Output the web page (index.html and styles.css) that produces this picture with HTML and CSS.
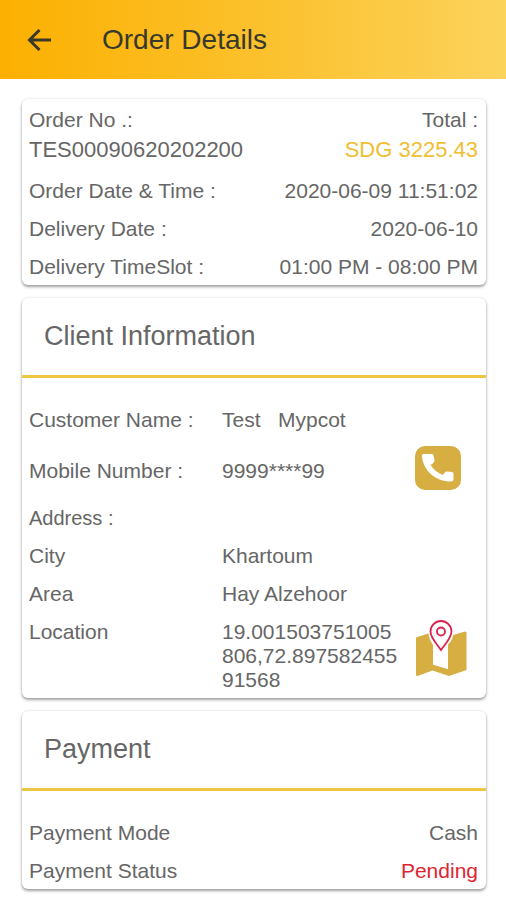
FILE: index.html
```html
<!DOCTYPE html>
<html lang="en">
<head>
    <meta charset="UTF-8">
    <meta name="viewport" content="width=device-width, initial-scale=1.0">
    <title>Order Details</title>
    <link rel="stylesheet" href="styles.css">
</head>
<body>
    <header class="header">
        <button class="back-btn" type="button" aria-label="Back">
            <svg width="26" height="24" viewBox="0 0 26 24" fill="none" stroke="currentColor" stroke-width="3">
                <path d="M25 12H4M13.500 2L3.500 12L13.500 22"/>
            </svg>
        </button>
        <h1>Order Details</h1>
    </header>

    <main class="content">
        <section class="card order-card">
            <dl>
                <div class="row order-top"><dt>Order No .:</dt><dd>Total :</dd></div>
                <div class="row order-main"><dt>TES00090620202200</dt><dd class="total">SDG 3225.43</dd></div>
                <div class="row"><dt>Order Date &amp; Time :</dt><dd>2020-06-09 11:51:02</dd></div>
                <div class="row"><dt>Delivery Date :</dt><dd>2020-06-10</dd></div>
                <div class="row"><dt>Delivery TimeSlot :</dt><dd>01:00 PM - 08:00 PM</dd></div>
            </dl>
        </section>

        <section class="card">
            <h2 class="card-title">Client Information</h2>
            <dl class="card-body">
                <div class="info-row"><dt>Customer Name :</dt><dd>Test&nbsp;&nbsp; Mypcot</dd></div>
                <div class="info-row phone-row">
                    <dt>Mobile Number :</dt>
                    <dd>9999****99</dd>
                    <dd class="action">
                        <button class="icon-btn call-btn" type="button" aria-label="Call customer">
                            <svg width="46" height="44" viewBox="0 0 46 44">
                                <path fill="#fff" d="M8 8H17Q18 8 18.300 9L19.500 14Q19.500 17 15.500 19Q20 26 28 29Q29.500 25.500 32 25.500L37 26Q38.500 26 38.500 28V33.500Q38.500 35.500 36 35.500C21 35.500 8 25 7 10Q7 8 8 8Z"/>
                            </svg>
                        </button>
                    </dd>
                </div>
                <div class="info-row address-row"><dt>Address :</dt></div>
                <div class="info-row"><dt>City</dt><dd>Khartoum</dd></div>
                <div class="info-row"><dt>Area</dt><dd>Hay Alzehoor</dd></div>
                <div class="info-row">
                    <dt>Location</dt>
                    <dd class="coords">19.001503751005806,72.89758245591568</dd>
                    <dd class="action">
                        <button class="icon-btn" type="button" aria-label="Show on map">
                            <svg width="52" height="58" viewBox="0 0 52 58">
                                <path fill="#d6ae42" d="M1 17.500L18 12V44.500L33 49V16.500L50 11.500Q51.500 11.500 51.500 13V50L34 56L17.500 50.500L2.500 56Q1 56 1 54.500Z"/>
                                <path fill="#fff" d="M26 0A12.500 12.500 0 0 0 13.500 12C13.500 19 17 23 18 25V44.500L33 49V25C35 22 38.500 19 38.500 12A12.500 12.500 0 0 0 26 0Z"/>
                                <path fill="none" stroke="#dc1f4e" stroke-width="1.800" d="M26 1A10.500 10.500 0 0 0 15.500 11.500C15.500 18 22 24 26 30C30 24 36.500 18 36.500 11.500A10.500 10.500 0 0 0 26 1Z"/>
                                <circle cx="26" cy="11.500" r="4" fill="none" stroke="#dc1f4e" stroke-width="1.800"/>
                            </svg>
                        </button>
                    </dd>
                </div>
            </dl>
        </section>

        <section class="card">
            <h2 class="card-title">Payment</h2>
            <dl class="card-body">
                <div class="row"><dt>Payment Mode</dt><dd>Cash</dd></div>
                <div class="row"><dt>Payment Status</dt><dd class="pending">Pending</dd></div>
            </dl>
        </section>
    </main>
</body>
</html>
```

FILE: styles.css
```css
* { margin: 0; padding: 0; box-sizing: border-box; }
body { font-family: "Liberation Sans", Arial, sans-serif; font-size: 21px; line-height: 24px; color: #666; background: #fff; }

.header { display: flex; align-items: center; gap: 50px; height: 79px; padding: 0 26px; background: linear-gradient(90deg, #fcb000 0%, #fbc230 55%, #fcd35c 100%); color: #38382c; }
.header h1 { font-size: 28px; line-height: 32px; font-weight: 400; }
.back-btn { display: flex; border: none; background: none; color: inherit; cursor: pointer; }

.content { display: flex; flex-direction: column; gap: 13px; padding: 20px 20px 10px 22px; }
.card { background: #fff; border-radius: 6px; box-shadow: 0 2px 3px rgba(0, 0, 0, 0.35), 0 0 3px rgba(0, 0, 0, 0.12); }
.order-card { padding: 9px 8px 6px 7px; }
.card-title { padding: 22px 22px 23px; border-bottom: 3px solid #efc643; font-size: 27px; line-height: 32px; font-weight: 400; }
.card-body { padding: 30px 8px 6px 7px; }

.row { display: flex; justify-content: space-between; }
.row + .row, .info-row + .info-row { margin-top: 14px; }
.row + .order-main { margin-top: 3px; font-size: 22px; line-height: 30px; }
.total { color: #f0be32; }
.pending { color: #e02430; }

.info-row { display: grid; grid-template-columns: 179px minmax(0, 1fr) 63px; column-gap: 14px; align-items: start; }
.phone-row { align-items: end; padding-bottom: 2px; }
.phone-row > :not(.action) { padding-bottom: 7px; }
.address-row { font-size: 20px; }
.coords { word-break: break-all; }
.action { height: 44px; }
.icon-btn { display: block; border: none; background: none; cursor: pointer; }
.icon-btn svg { display: block; }
.call-btn { background: #d6ae42; border-radius: 10px; }
```
